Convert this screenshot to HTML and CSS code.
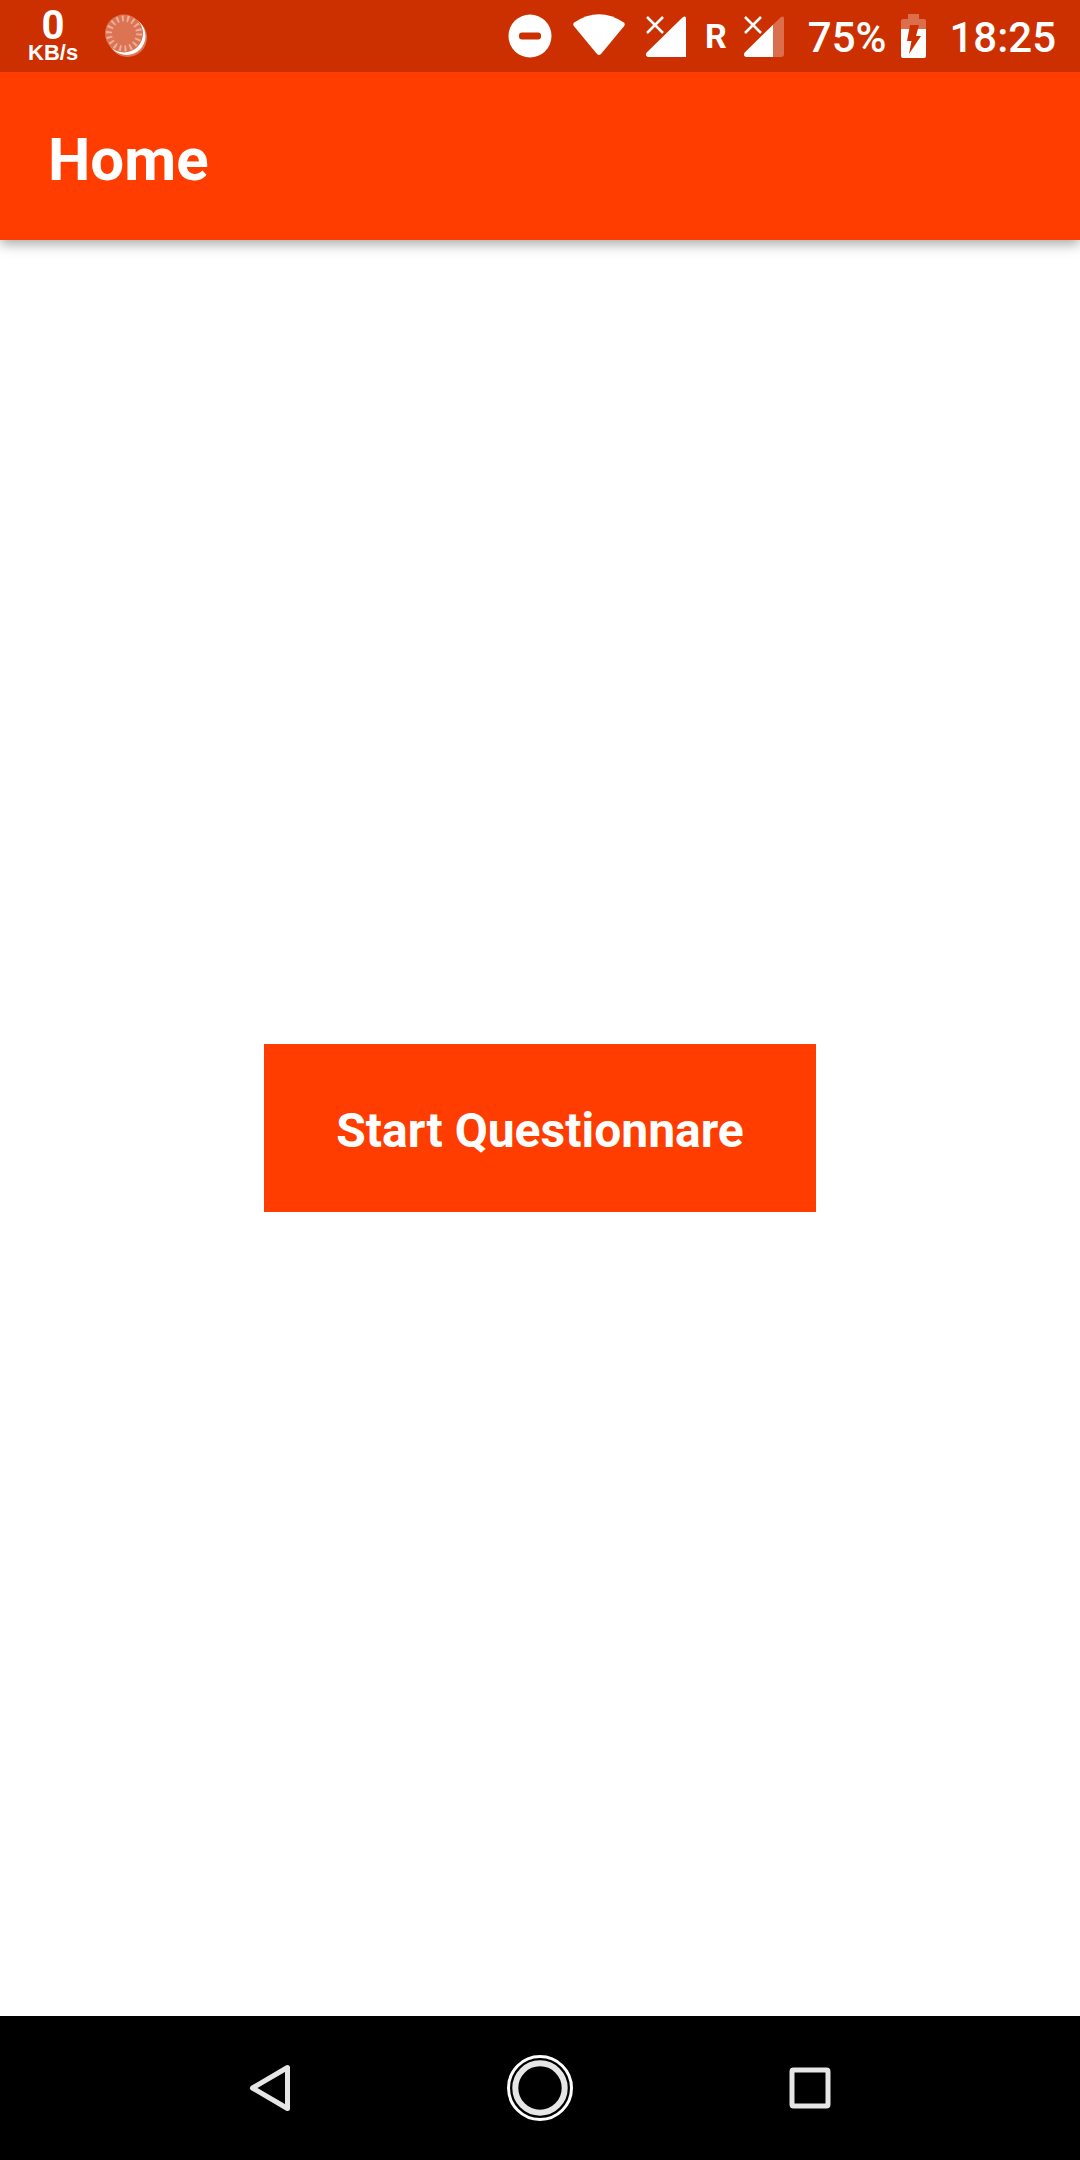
FILE: index.html
```html
<!DOCTYPE html>
<html lang="en">
<head>
<meta charset="utf-8">
<meta name="viewport" content="width=device-width, initial-scale=1">
<title>Home</title>
<link rel="stylesheet" href="styles.css">
</head>
<body>
<div class="status">
  <div class="status-left">
    <div class="speed"><span class="speed-value">0</span><span class="speed-unit">KB/s</span></div>
    <svg class="sync" width="44" height="44" viewBox="0 0 44 44" aria-hidden="true">
      <circle cx="23.500" cy="23.500" r="19.500" fill="#fff" opacity=".35"/>
      <circle cx="22.500" cy="22" r="19" fill="#fff"/>
      <circle cx="20" cy="19.500" r="19" fill="#dc7454"/>
      <circle cx="20" cy="19.500" r="15" fill="none" stroke="#eab09c" stroke-width="6" stroke-dasharray="2 3.236"/>
    </svg>
  </div>
  <div class="status-right">
    <svg width="44" height="44" viewBox="0 0 44 44" aria-label="Do not disturb" role="img">
      <circle cx="22" cy="22" r="21.500" fill="#fff"/>
      <rect x="11" y="18.500" width="22" height="7" rx="3" fill="#cc3000"/>
    </svg>
    <svg width="52" height="44" viewBox="0 0 52 44" aria-label="Wi-Fi" role="img">
      <path d="M1.200 8.500Q26-8 50.800 8.500Q52.500 10 51.200 12L28 40Q26 42 24 40L.8 12Q-.5 10 1.200 8.500Z" fill="#fff"/>
    </svg>
    <svg width="40" height="44" viewBox="0 0 40 44" aria-label="No signal" role="img">
      <path d="M.7 38.500 36.500 3.500Q40 1 40 5V43H2Q-1.500 42 .7 38.500Z" fill="#fff"/>
      <path d="M1 3 17 19M17 3 1 19" stroke="#fff" stroke-width="2.500"/>
    </svg>
    <span class="roaming">R</span>
    <svg width="40" height="44" viewBox="0 0 40 44" aria-label="No signal" role="img">
      <path d="M29 10.800 36.500 3.500Q40 1 40 5V40Q40 43 37 43H29Z" fill="#db6f4d"/>
      <path d="M.7 38.500 29 10.800V43H2Q-1.500 42 .7 38.500Z" fill="#fff"/>
      <path d="M1 3 17 19M17 3 1 19" stroke="#fff" stroke-width="2.500"/>
    </svg>
    <span class="level">75%</span>
    <svg width="25" height="44" viewBox="0 0 25 44" aria-label="Charging" role="img">
      <path d="M7 0H18V5H23Q25 5 25 7V15H0V7Q0 5 2 5H7Z" fill="#db6f4d"/>
      <path d="M0 15H25V42Q25 44 23 44H2Q0 44 0 42Z" fill="#fff"/>
      <path d="M9 11H18L15 22H20L8 40L10.500 27H6Z" fill="#cc3000"/>
    </svg>
    <time class="clock">18:25</time>
  </div>
</div>
<header class="appbar"><h1>Home</h1></header>
<main class="content"><button class="start" type="button">Start Questionnare</button></main>
<nav class="navbar" aria-label="System navigation">
  <button type="button" aria-label="Back">
    <svg width="66" height="66" viewBox="0 0 66 66"><path d="M15.500 33 50.500 12.500V53.500Z" fill="none" stroke="#e6e6e6" stroke-width="5" stroke-linejoin="round"/></svg>
  </button>
  <button type="button" aria-label="Home">
    <svg width="66" height="66" viewBox="0 0 66 66"><circle cx="33" cy="33" r="31.500" fill="none" stroke="#fff" stroke-width="3"/><circle cx="33" cy="33" r="24.700" fill="none" stroke="#e6e6e6" stroke-width="6"/></svg>
  </button>
  <button type="button" aria-label="Recent apps">
    <svg width="66" height="66" viewBox="0 0 66 66"><rect x="15" y="15" width="36" height="36" rx="1.500" fill="none" stroke="#e6e6e6" stroke-width="5" stroke-linejoin="round"/></svg>
  </button>
</nav>
</body>
</html>
```
FILE: styles.css
```css
* {
  box-sizing: border-box;
}

body {
  margin: 0;
  min-height: 100vh;
  display: flex;
  flex-direction: column;
  background: #fff;
  color: #fff;
  font-family: Roboto, sans-serif;
}

svg {
  display: block;
  flex: none;
}

button {
  border: 0;
  padding: 0;
  color: inherit;
  font: inherit;
  cursor: pointer;
}

.status {
  position: relative;
  z-index: 2;
  height: 72px;
  padding: 0 24px 0 28px;
  display: flex;
  align-items: center;
  justify-content: space-between;
  background: #cc3000;
}

.status-left,
.status-right {
  display: flex;
  align-items: center;
}

.status-left {
  gap: 26px;
}

.speed {
  display: flex;
  flex-direction: column;
  align-items: center;
  padding-top: 2px;
}

.speed-value {
  font-size: 40px;
  font-weight: 700;
  line-height: 32px;
}

.speed-unit {
  font: bold 22px/22px "Liberation Sans", sans-serif;
}

.status-right {
  gap: 21px;
}

.roaming {
  font-size: 34px;
  font-weight: 700;
  line-height: 44px;
  margin: 0 -4px 0 -2px;
}

.level,
.clock {
  font-size: 42px;
  font-weight: 500;
  line-height: 48px;
  padding-top: 3px;
}

.level {
  margin: 0 -6px 0 3px;
}

.clock {
  margin-left: 2px;
}

.appbar {
  position: relative;
  z-index: 1;
  height: 168px;
  padding: 8px 48px 0;
  display: flex;
  align-items: center;
  background: #ff3d00;
  box-shadow: 0 4px 12px rgba(0, 0, 0, 0.35);
}

.appbar h1 {
  margin: 0;
  font-size: 60px;
  font-weight: 700;
  line-height: 72px;
}

.content {
  flex: 1;
  display: flex;
  align-items: center;
  justify-content: center;
}

.start {
  padding: 59px 72px 53px;
  background: #ff3d00;
  font-size: 48px;
  font-weight: 700;
  line-height: 56px;
}

.navbar {
  height: 144px;
  padding: 0 12.5%;
  display: grid;
  grid-template-columns: repeat(3, 1fr);
  background: #000;
}

.navbar button {
  display: flex;
  align-items: center;
  justify-content: center;
  background: none;
}
```
